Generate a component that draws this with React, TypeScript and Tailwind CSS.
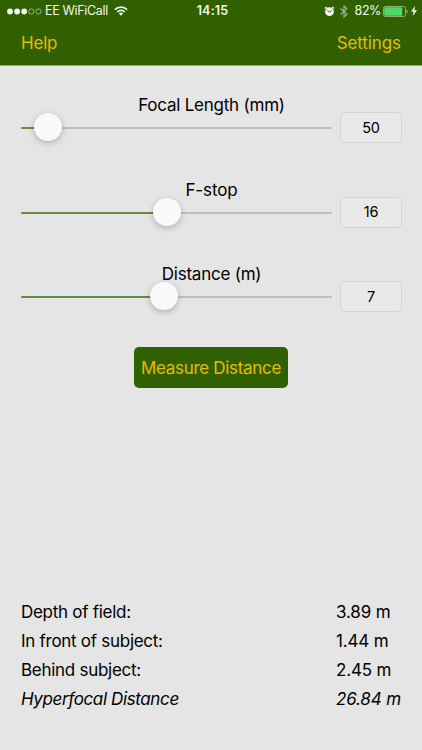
import React from "react";

type SliderRowProps = {
  label: string;
  value: string;
  position: number;
  labelClass: string;
};

const sliders: SliderRowProps[] = [
  { label: "Focal Length (mm)", value: "50", position: 27.3, labelClass: "tracking-[-0.23px]" },
  { label: "F-stop", value: "16", position: 145.5, labelClass: "tracking-[-0.1px]" },
  { label: "Distance (m)", value: "7", position: 142.5, labelClass: "tracking-[-0.23px]" },
];

const results = [
  { label: "Depth of field:", value: "3.89 m", className: "tracking-[-0.28px]" },
  { label: "In front of subject:", value: "1.44 m", className: "tracking-[-0.28px]" },
  { label: "Behind subject:", value: "2.45 m", className: "tracking-[-0.28px]" },
  { label: "Hyperfocal Distance", value: "26.84 m", className: "tracking-[-0.38px]", italic: true },
];

const StatusBar = () => {
  return (
    <div className="flex h-[22px] items-center justify-between pl-[7px] pr-[5px] text-[12.5px] text-[#f4f8ee]">
      <div className="flex w-[160px] items-center">
        <svg width="35" height="7" viewBox="0 0 35 7" className="mr-[3px]">
          <circle cx="3" cy="3.5" r="2.9" fill="currentColor" />
          <circle cx="10.1" cy="3.5" r="2.9" fill="currentColor" />
          <circle cx="17.2" cy="3.5" r="2.9" fill="currentColor" />
          <circle cx="24.3" cy="3.5" r="2.6" fill="none" stroke="currentColor" strokeWidth="0.5" />
          <circle cx="31.4" cy="3.5" r="2.6" fill="none" stroke="currentColor" strokeWidth="0.5" />
        </svg>
        <span className="tracking-[-0.32px] whitespace-nowrap">EE WiFiCall</span>
        <svg width="14" height="10" viewBox="0 0 14 10" className="ml-[6px]" fill="none" stroke="currentColor" strokeWidth="1.7">
          <path d="M0.9 3.7a8.7 8.7 0 0 1 12.2 0" />
          <path d="M3.2 6a5.4 5.4 0 0 1 7.6 0" />
          <path d="M7 9.8L4.8 7.6a3.1 3.1 0 0 1 4.4 0z" fill="currentColor" stroke="none" />
        </svg>
      </div>
      <span className="pl-px font-semibold tracking-[0.2px]">14:15</span>
      <div className="flex w-[160px] items-center justify-end">
        <svg width="11" height="11" viewBox="0 0 11 11">
          <circle cx="5.5" cy="5.7" r="4.4" fill="currentColor" />
          <path d="M0.8 2.6L2.8 0.9M10.2 2.6L8.2 0.9" stroke="currentColor" strokeWidth="1.3" />
          <path d="M3.3 4.3L5.5 6.1L7.8 4.6" fill="none" stroke="#306000" strokeWidth="1" />
        </svg>
        <svg width="8" height="13" viewBox="0 0 8 13" className="ml-[5px] text-[#a3b88d]" fill="none" stroke="currentColor" strokeWidth="1.1">
          <path d="M0.6 3.5L7 9.2L4 12V1L7 3.8L0.6 9.5" />
        </svg>
        <span className="ml-[7px] tracking-[-0.4px]">82%</span>
        <svg width="25" height="11" viewBox="0 0 25 11" className="ml-[2px]">
          <rect x="0.5" y="0.5" width="22" height="10" rx="1.8" fill="none" stroke="#a9bf93" strokeWidth="0.8" />
          <rect x="1.2" y="1.2" width="18" height="8.6" rx="1" fill="#4cd964" />
          <path d="M23.7 3.7c1.1 0.4 1.1 3.2 0 3.6z" fill="#dce6d2" />
        </svg>
        <svg width="6" height="10" viewBox="0 0 6 10" className="ml-[3px]">
          <path d="M4 0L0 5.5H2.5L1.8 10L6 4.2H3.4z" fill="currentColor" />
        </svg>
      </div>
    </div>
  );
};

const SliderRow = ({ label, value, position, labelClass }: SliderRowProps) => {
  return (
    <div className="h-[84.5px]">
      <div className={`h-[18px] text-center text-[17px] leading-[20px] ${labelClass}`}>{label}</div>
      <div className="-mt-[1px] flex h-[31px] items-center">
        <div className="relative mt-[1px] h-[2px] w-[311px] rounded-full bg-[#bebebe]">
          <div className="h-full rounded-l-full bg-[#668b42]" style={{ width: position }}></div>
          <div
            className="absolute -top-[14px] h-7 w-7 -translate-x-1/2 rounded-full bg-[#f9f9f9] shadow-[0_2px_6px_rgba(0,0,0,0.24)]"
            style={{ left: position }}
          ></div>
        </div>
        <div className="ml-2 flex h-[31px] w-[62px] items-center justify-center rounded-[5px] border border-[#d3d3d3] bg-[#e9e9e9] text-[14.5px] tracking-[-0.3px]">
          {value}
        </div>
      </div>
    </div>
  );
};

const App = () => {
  return (
    <div className="flex h-[750px] w-[422px] flex-col overflow-hidden bg-[#e5e5e5] font-['Inter',sans-serif] text-black">
      <header className="h-[66px] shrink-0 border-b border-[#91aa7a] bg-[#306000]">
        <StatusBar />
        <nav className="flex h-[43px] items-center justify-between px-[21px] pt-[1px] text-[17px] text-[#e8bb00]">
          <button className="tracking-[-0.2px]">Help</button>
          <button className="tracking-[-0.1px]">Settings</button>
        </nav>
      </header>

      <main className="flex grow flex-col pl-[21px] pr-[20px] pt-[29.3px]">
        {sliders.map((slider) => (
          <SliderRow key={slider.label} {...slider} />
        ))}
        <button className="mt-[-2.3px] ml-[113px] h-[41px] w-[154px] rounded-[5px] bg-[#306000] pt-[3px] text-[17px] tracking-[-0.31px] whitespace-nowrap text-[#e8bb00]">
          Measure Distance
        </button>
      </main>

      <section className="pb-[36px] pl-[21px] text-[17px]">
        {results.map((result) => (
          <div
            key={result.label}
            className={`flex h-[29px] items-center whitespace-nowrap ${result.italic ? "italic" : ""}`}
          >
            <span className={`w-[315px] ${result.className}`}>{result.label}</span>
            <span className="tracking-[-0.15px]">{result.value}</span>
          </div>
        ))}
      </section>
    </div>
  );
};

export default App;
